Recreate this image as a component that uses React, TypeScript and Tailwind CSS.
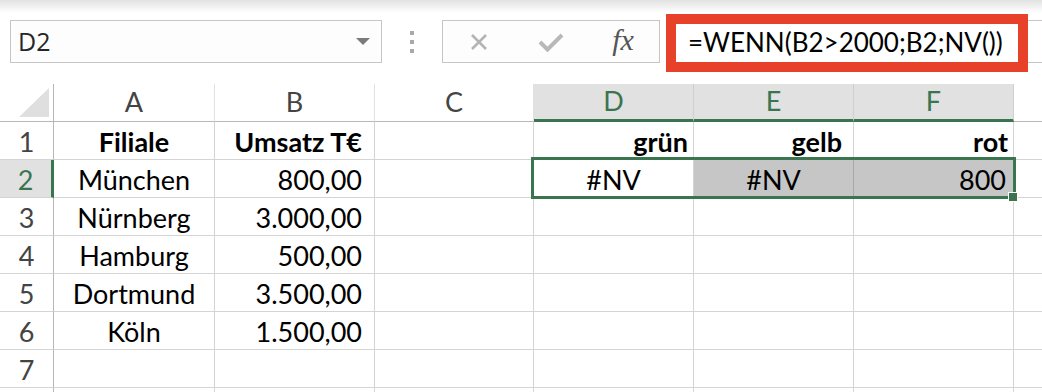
import React from 'react';

type Cell = {
  text?: string;
  align?: 'left' | 'center' | 'right';
  bold?: boolean;
  pad?: string;
};

// column widths incl. the 1px gridline on the right
const colWidths = ['w-[161px]', 'w-[160px]', 'w-[159px]', 'w-[160px]', 'w-[160px]', 'w-[160px]'];
const colNames = ['A', 'B', 'C', 'D', 'E', 'F'];

const rows: Cell[][] = [
  [
    { text: 'Filiale', align: 'center', bold: true },
    { text: 'Umsatz T€', align: 'right', bold: true, pad: 'pr-[12px]' },
    {},
    { text: 'grün', align: 'right', bold: true, pad: 'pr-[5px]' },
    { text: 'gelb', align: 'right', bold: true, pad: 'pr-[11px]' },
    { text: 'rot', align: 'right', bold: true, pad: 'pr-[5px]' },
  ],
  [
    { text: 'München', align: 'center' },
    { text: '800,00', align: 'right', pad: 'pr-[12px]' },
    {},
    { text: '#NV', align: 'center' },
    { text: '#NV', align: 'center' },
    { text: '800', align: 'right', pad: 'pr-[7px]' },
  ],
  [{ text: 'Nürnberg', align: 'center' }, { text: '3.000,00', align: 'right', pad: 'pr-[12px]' }, {}, {}, {}, {}],
  [{ text: 'Hamburg', align: 'center' }, { text: '500,00', align: 'right', pad: 'pr-[12px]' }, {}, {}, {}, {}],
  [{ text: 'Dortmund', align: 'center' }, { text: '3.500,00', align: 'right', pad: 'pr-[12px]' }, {}, {}, {}, {}],
  [{ text: 'Köln', align: 'center' }, { text: '1.500,00', align: 'right', pad: 'pr-[12px]' }, {}, {}, {}, {}],
  [{}, {}, {}, {}, {}, {}],
  [{}, {}, {}, {}, {}, {}],
];

const alignClass = {
  left: 'justify-start pl-[6px]',
  center: 'justify-center',
  right: 'justify-end',
};

function Toolbar() {
  return (
    <div className="h-[84px] bg-linear-to-b from-[#e2e2e2] to-white to-[15%] flex items-start pt-[20px] pl-[10px]">
      {/* Name box */}
      <div className="w-[372px] h-[43px] border border-[#c6c6c6] bg-[#fdfdfd] flex items-center justify-between pl-[7px] pr-[11px]">
        <span className="font-['Open_Sans',sans-serif] text-[25px] text-[#262626] leading-none">D2</span>
        <svg width="14" height="8" viewBox="0 0 14 8">
          <path d="M0 0h14L7 7z" fill="#7b7b7b" />
        </svg>
      </div>

      {/* grip dots */}
      <div className="w-[60px] h-[43px] flex flex-col items-center justify-center gap-[5px]">
        <span className="w-[4px] h-[4px] bg-[#a9a9a9]" />
        <span className="w-[4px] h-[4px] bg-[#a9a9a9]" />
        <span className="w-[4px] h-[4px] bg-[#a9a9a9]" />
      </div>

      {/* cancel / enter / fx */}
      <div className="w-[218px] h-[43px] border border-[#c6c6c6] bg-[#fdfdfd] flex items-center">
        <div className="flex-1 flex justify-center">
          <svg width="18" height="18" viewBox="0 0 18 18">
            <path d="M2 2l14 14M16 2L2 16" stroke="#b4b4b4" strokeWidth="2.6" />
          </svg>
        </div>
        <div className="flex-1 flex justify-center">
          <svg width="26" height="20" viewBox="0 0 26 20">
            <path d="M2 10l7.5 7.5L24 3" fill="none" stroke="#b8b8b8" strokeWidth="4" />
          </svg>
        </div>
        <div className="flex-1 flex justify-center">
          <span className="font-['Liberation_Serif',serif] italic text-[30px] leading-none text-[#555] -mt-[3px]">fx</span>
        </div>
      </div>

      {/* formula input with red highlight */}
      <div className="relative ml-[6px] flex-1 h-[43px] border border-r-0 border-[#c6c6c6] bg-white flex items-center pl-[21px]">
        <span className="font-['Lato',sans-serif] text-[26px] leading-none text-black">=WENN(B2&gt;2000;B2;NV())</span>
        <div className="absolute left-[-1px] top-[-7px] w-[362px] h-[58px] border-[10px] border-[#e8412a]" />
      </div>
    </div>
  );
}

function HeaderRow() {
  return (
    <div className="flex h-[38px] font-['Lato',sans-serif] text-[27px]">
      {/* corner */}
      <div className="w-[54px] shrink-0 border-r border-b border-[#b7b7b7] bg-white flex items-end justify-end pr-[4px] pb-[4px]">
        <svg width="30" height="29" viewBox="0 0 30 29">
          <path d="M30 0v29H0z" fill="#dfdfdf" />
        </svg>
      </div>
      {colNames.map((name, i) => {
        const selected = i >= 3;
        return (
          <div
            key={name}
            className={
              colWidths[i] +
              ' shrink-0 flex items-center justify-center ' +
              (selected
                ? 'bg-[#e1e1e1] text-[#3a7550] border-r border-r-[#cfcfcf] border-b-[3px] border-b-[#3a7550]'
                : 'bg-white text-[#444] border-r border-r-[#e1e1e1] border-b border-b-[#b7b7b7]')
            }
          >
            {name}
          </div>
        );
      })}
      <div className="flex-1 border-b border-[#b7b7b7] bg-white" />
    </div>
  );
}

export default function App() {
  return (
    <div className="relative w-[1042px] h-[392px] overflow-hidden bg-white">
      <Toolbar />
      <HeaderRow />
      <div className="font-['Lato',sans-serif] text-[27px] leading-[35px] text-black">
        {rows.map((row, r) => {
          const rowSelected = r === 1;
          return (
            <div key={r} className="flex h-[38px]">
              <div
                className={
                  'w-[54px] shrink-0 flex items-end justify-center border-b border-[#d4d4d4] ' +
                  (rowSelected
                    ? 'bg-[#e1e1e1] text-[#3a7550] border-r-[3px] border-r-[#3a7550]'
                    : 'bg-white text-[#444] border-r border-r-[#b7b7b7]')
                }
              >
                {r < 7 ? r + 1 : ''}
              </div>
              {row.map((cell, c) => {
                const shaded = rowSelected && (c === 4 || c === 5);
                return (
                  <div
                    key={c}
                    className={
                      colWidths[c] +
                      ' shrink-0 flex items-end border-b border-r ' +
                      (shaded ? 'bg-[#c6c6c6] border-r-[#a8a8a8] border-b-[#d4d4d4] ' : 'border-[#d4d4d4] ') +
                      (cell.bold ? 'font-bold ' : '') +
                      alignClass[cell.align ?? 'left'] +
                      ' ' +
                      (cell.pad ?? '')
                    }
                  >
                    {cell.text}
                  </div>
                );
              })}
              <div className="flex-1 border-b border-[#d4d4d4]" />
            </div>
          );
        })}
      </div>

      {/* selection D2:F2 */}
      <div className="absolute left-[531px] top-[157px] w-[485px] h-[42px] border-[3px] border-[#3a7550]" />
      <div className="absolute left-[1008px] top-[192px] w-[10px] h-[10px] bg-[#3a7550] border border-white" />
    </div>
  );
}
